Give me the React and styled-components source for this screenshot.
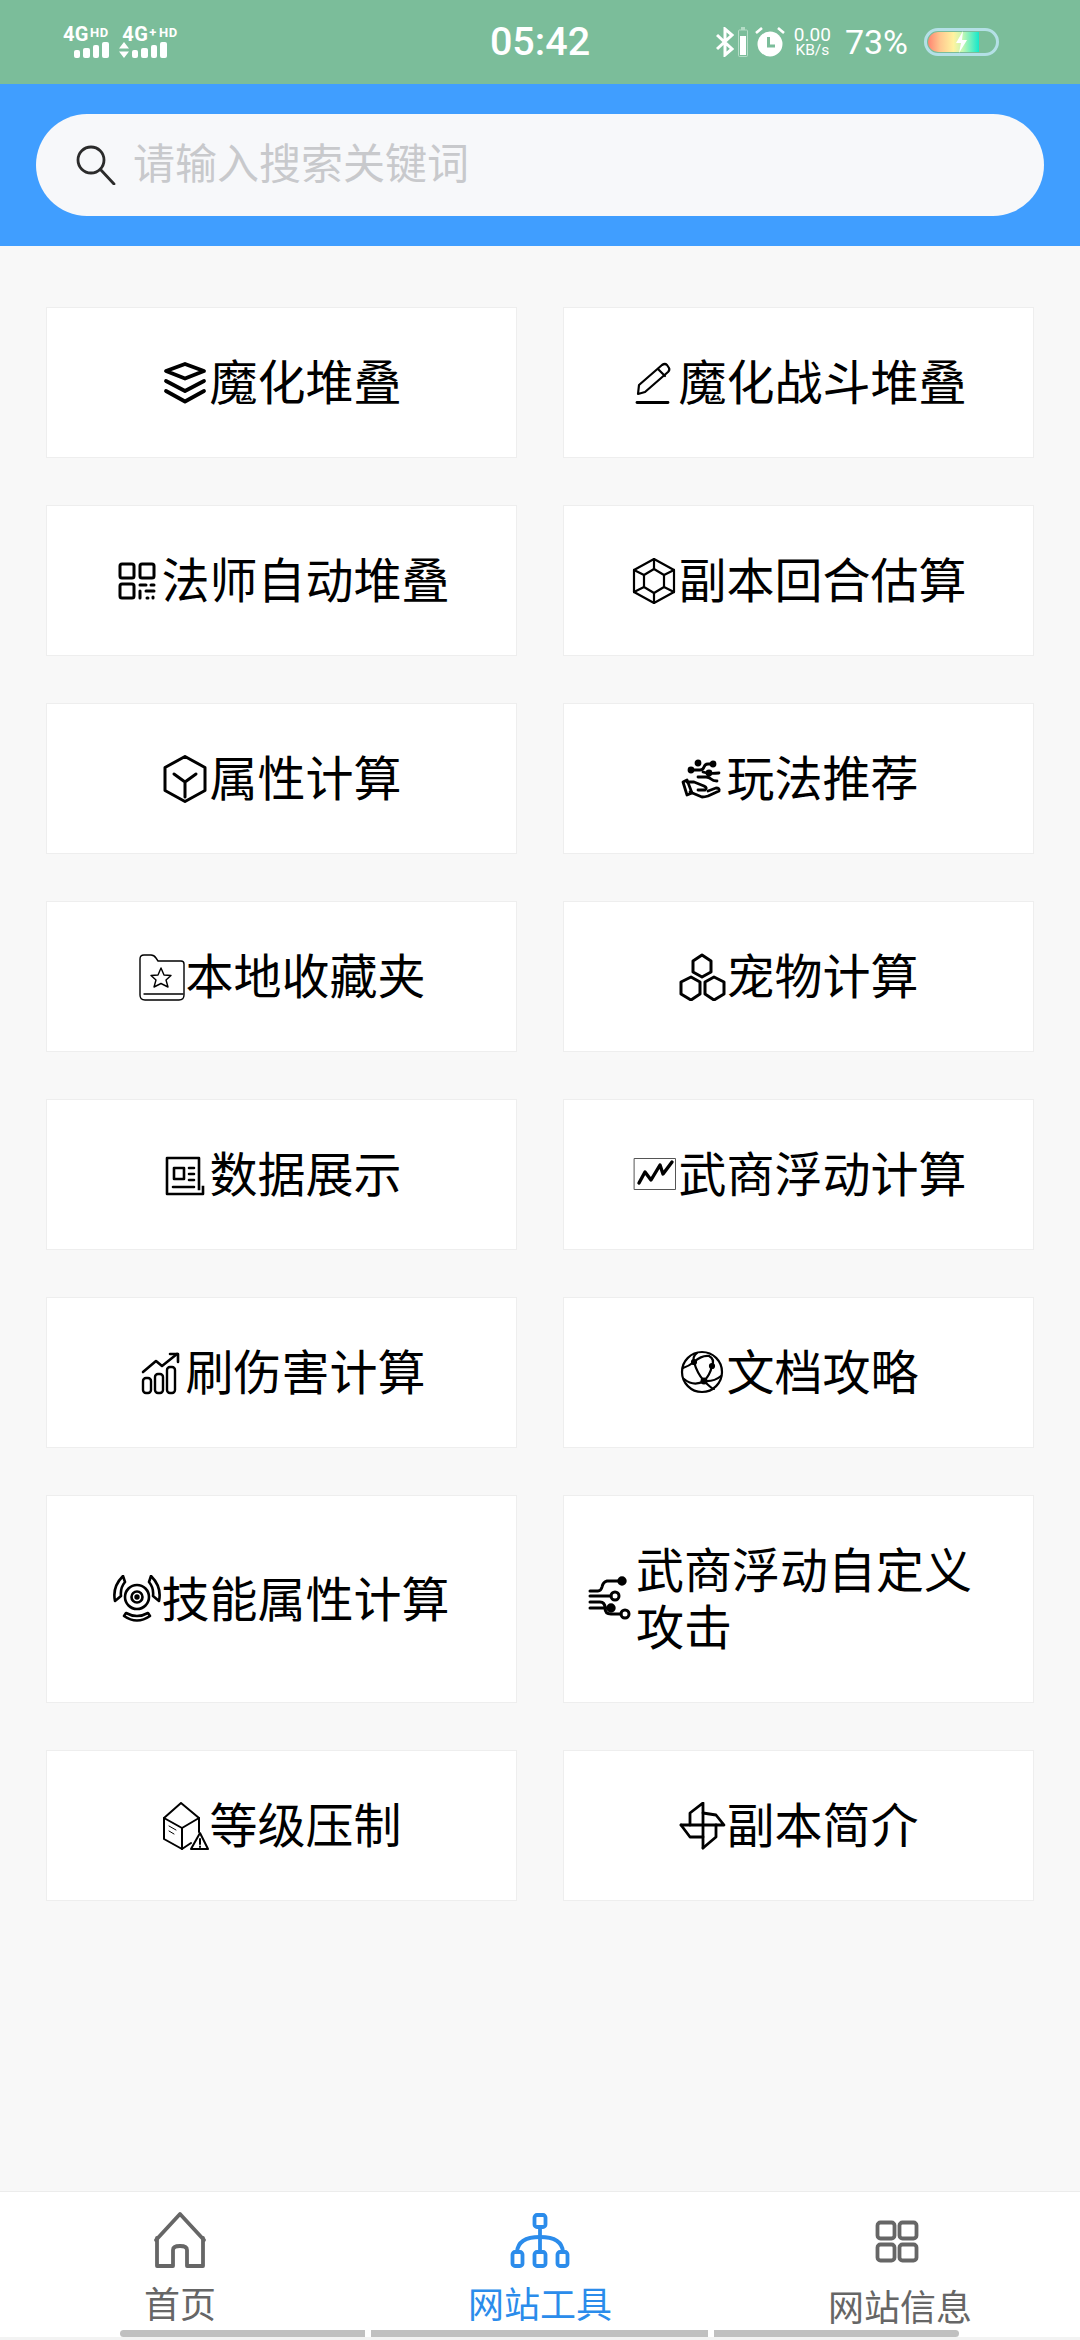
import React from 'react';
import styled, { createGlobalStyle } from 'styled-components';

const GlobalStyle = createGlobalStyle`
  html, body { margin: 0; padding: 0; background: #f8f8f8; }
  * { box-sizing: border-box; }
  body { font-family: "Noto Sans CJK SC", Roboto, sans-serif; }
`;

const Page = styled.div`
  width: 1080px;
  height: 2340px;
  display: flex;
  flex-direction: column;
  background: #f8f8f8;
  overflow: hidden;
`;

// Status bar
const StatusBar = styled.div`
  height: 84px;
  flex: none;
  background: #7bbd9a;
  color: #fff;
  display: grid;
  grid-template-columns: 1fr auto 1fr;
  align-items: center;
  font-family: Roboto, sans-serif;
`;

const StatusLeft = styled.div`
  display: flex;
  gap: 10px;
  padding: 0 0 0 63px;
  align-items: flex-start;
`;

const SignalBlock = styled.div`
  display: flex;
  flex-direction: column;
  align-items: flex-end;
  height: 30px;
`;

const NetName = styled.div`
  display: flex;
  align-items: flex-start;
  height: 14px;
  font-size: 20px;
  line-height: 15px;
  font-weight: 700;
  letter-spacing: 0.4px;
`;

const NetSup = styled.span`
  font-size: 13px;
  line-height: 11px;
  font-weight: 700;
  letter-spacing: 0.6px;
  margin-left: ${p => p.$gap || 1}px;
`;

const Bars = styled.div`
  display: flex;
  align-items: flex-end;
  gap: 3px;
  height: 16px;
  margin-top: 1px;
  margin-right: ${p => p.$inset || 0}px;
`;

const Bar = styled.span`
  width: 6.5px;
  height: ${p => p.$h}px;
  background: #fff;
  border-radius: 2px;
`;

const Time = styled.div`
  font-size: 39.5px;
  line-height: 46px;
  font-weight: 500;
`;

const StatusRight = styled.div`
  display: flex;
  align-items: center;
  justify-content: flex-end;
  padding-right: 81px;
`;

const Speed = styled.div`
  display: flex;
  flex-direction: column;
  align-items: center;
  margin: 0 14px 0 9px;
  line-height: 1;
`;

const SpeedValue = styled.span`
  font-size: 19px;
  line-height: 17px;
`;

const SpeedUnit = styled.span`
  font-size: 15.5px;
  line-height: 15px;
`;

const Percent = styled.div`
  font-size: 34px;
  line-height: 40px;
  margin-right: 16px;
`;

const Battery = styled.div`
  width: 75px;
  height: 28px;
  border: 3px solid #b4e0e6;
  border-radius: 14px;
  padding: 1px;
  display: flex;
`;

const BatteryFill = styled.div`
  width: ${p => p.$level}%;
  border-radius: 11px 0 0 11px;
  background: linear-gradient(90deg, #ff8470, #ffc890 24%, #fff3a0 50%, #c4f7b4 68%, #14e8cb 100%);
  display: flex;
  align-items: center;
  justify-content: center;
  padding-left: 16px;
`;

// Search header
const SearchHeader = styled.div`
  height: 162px;
  flex: none;
  background: #409eff;
  padding: 30px 36px;
`;

const SearchBox = styled.label`
  height: 102px;
  background: #f7f8fa;
  border-radius: 51px;
  display: flex;
  align-items: center;
  padding-left: 40px;
  gap: 17px;
`;

const SearchInput = styled.input`
  flex: 1;
  min-width: 0;
  border: none;
  outline: none;
  background: transparent;
  font-family: "Noto Sans CJK SC", sans-serif;
  font-size: 42px;
  padding: 0;
  margin-bottom: 9px;
  color: #323233;

  &::placeholder {
    color: #c8c9cc;
    opacity: 1;
  }
`;

// Tool grid
const ToolGrid = styled.div`
  flex: 1;
  display: grid;
  grid-template-columns: repeat(2, 1fr);
  gap: 47px 46px;
  padding: 61px 46px 0;
  align-content: start;
`;

const ToolCard = styled.div`
  background: #fff;
  border: 1px solid #eeeeee;
  padding: 46px 24px;
  display: flex;
  align-items: center;
  justify-content: center;
`;

const ToolLabel = styled.span`
  font-size: 48px;
  line-height: 57px;
  margin: -3px 0 3px;
  color: #000;
`;

const ToolIcon = styled.svg`
  width: 48px;
  height: 48px;
  flex: none;
  fill: none;
  stroke: #000;
  stroke-width: ${p => p.$weight || 3}px;
  stroke-linejoin: round;
  stroke-linecap: round;
`;

// Bottom tabs
const TabBar = styled.div`
  position: relative;
  height: 149px;
  flex: none;
  background: #fff;
  border-top: 1px solid #ececec;
  display: grid;
  grid-template-columns: repeat(3, 1fr);
`;

const Tab = styled.div`
  display: flex;
  flex-direction: column;
  align-items: center;
  padding-top: 18px;
  color: ${p => (p.$active ? '#2b8ceb' : '#666')};
`;

const TabIcon = styled.svg`
  width: 60px;
  height: 60px;
  fill: none;
  stroke: currentColor;
  stroke-width: 3.8px;
  stroke-linejoin: round;
  stroke-linecap: round;
`;

const TabLabel = styled.span`
  font-size: 36px;
  line-height: 44px;
  margin-top: ${p => p.$drop || 10}px;
`;

const HomeIndicator = styled.div`
  position: absolute;
  left: 120px;
  bottom: 3px;
  width: 839px;
  height: 7px;
  display: flex;
  gap: 6px;
`;

const IndicatorPart = styled.span`
  height: 7px;
  width: ${p => p.$w}px;
  background: #c0c0c0;
  border-radius: ${p => p.$r || '0'};
`;

const BottomEdge = styled.div`
  position: absolute;
  left: 0;
  right: 0;
  bottom: 0;
  height: 3px;
  background: #f3f3f3;
`;

const LayersIcon = () => (
  <ToolIcon viewBox="0 0 48 48" $weight={3.8}>
    <path d="M24 5 L43 12 L24 19.5 L5 12 Z" />
    <path d="M5 22 L24 32 L43 22" />
    <path d="M5 32 L24 42.5 L43 32" />
  </ToolIcon>
);

const PencilIcon = () => (
  <ToolIcon viewBox="0 0 48 48" $weight={2.2}>
    <path d="M8 35 L9 26 L32 6 Q35 4 37 6 L39 9 Q40 11 38 13 L15 33 Z" />
    <path d="M28 10 L35 17" />
    <path d="M7 43.5 H38" strokeWidth="2.8" />
  </ToolIcon>
);

const QrIcon = () => (
  <ToolIcon viewBox="0 0 48 48">
    <rect x="7" y="7" width="14" height="14" rx="2" />
    <rect x="27" y="7" width="14" height="14" rx="2" />
    <rect x="7" y="27" width="14" height="14" rx="2" />
    <path d="M27 28 H33 M38 28 H41 M27 34 V41 M33 34 H41 M34 41 H35 M40 40 V41" />
  </ToolIcon>
);

const GemIcon = () => (
  <ToolIcon viewBox="0 0 48 48" $weight={2.2}>
    <path d="M24 2 L44 13 V35 L24 46 L4 35 V13 Z" />
    <path d="M24 12 L34 18 V30 L24 36 L14 30 V18 Z" />
    <path d="M24 2 V12 M44 13 L34 18 M44 35 L34 30 M24 46 V36 M4 35 L14 30 M4 13 L14 18" />
  </ToolIcon>
);

const CubeIcon = () => (
  <ToolIcon viewBox="0 0 48 48">
    <path d="M24 1.5 L44 12.5 V35.5 L24 46.5 L4 35.5 V12.5 Z" />
    <path d="M13 19 L24 27 L35 19 M24 27 V42" />
  </ToolIcon>
);

const HandIcon = () => (
  <ToolIcon viewBox="0 0 48 48" $weight={2.8}>
    <circle cx="20" cy="8" r="2" fill="#000" />
    <circle cx="13" cy="15" r="2" fill="#000" />
    <circle cx="35" cy="9" r="2" fill="#000" />
    <circle cx="31" cy="18" r="2" fill="#000" />
    <path d="M13 15 H22 Q25 15 26 12 Q27 9 30 9 H35" />
    <path d="M25 17 Q30 19 41 18" />
    <path d="M20 22 H28 Q31 22 33 24 Q35 26 39 26" />
    <path d="M5 27 L9 25 L14 38 L9 40 Z" />
    <path d="M9 27 H16 L26 31 Q30 33 27 35 H20" />
    <path d="M12 37 L24 42 Q27 42 30 41 L41 36 Q42 33 38 33 L30 36" />
  </ToolIcon>
);

const FolderIcon = () => (
  <ToolIcon viewBox="0 0 48 48" $weight={1.4}>
    <path d="M3 6 Q3 2 7 2 H14 Q17 2 19 5 L21 8 H44 Q47 8 47 11 V42 Q47 47 42 47 H8 Q3 47 3 42 Z" />
    <path d="M24 15 L27 22 L34 22.5 L29 27 L31 34 L24 30.5 L17 34 L19 27 L14 22.5 L21 22 Z" />
    <path d="M7 41 H46" />
  </ToolIcon>
);

const HexesIcon = () => (
  <ToolIcon viewBox="0 0 48 48">
    <path d="M24 2 L33 8 V19 L24 24 L15 19 V8 Z" />
    <path d="M13 24 L22 29 V41 L13 47 L3 41 V29 Z" />
    <path d="M36 24 L46 29 V41 L36 47 L27 41 V29 Z" />
  </ToolIcon>
);

const DocIcon = () => (
  <ToolIcon viewBox="0 0 48 48" $weight={2.6}>
    <path d="M38 38 V7 H6 V43 H42 V36" strokeLinecap="square" />
    <rect x="13" y="17" width="10" height="11" />
    <path d="M28 17 H33 M28 23 H33 M28 29 H33 M12 36 H33" />
  </ToolIcon>
);

const TrendIcon = () => (
  <ToolIcon viewBox="0 0 48 48">
    <rect x="4.5" y="7.5" width="41" height="31" strokeWidth="1" stroke="#555" />
    <path d="M9 32 L15 21 L21 29 L30 14 L33 23 L42 11" strokeWidth="3.4" />
  </ToolIcon>
);

const GrowthIcon = () => (
  <ToolIcon viewBox="0 0 48 48" $weight={2.4}>
    <rect x="6" y="29" width="8" height="15" rx="3" />
    <rect x="18" y="25" width="8" height="19" rx="3" />
    <rect x="30" y="18" width="8" height="26" rx="3" />
    <path d="M6 23 L19 12 L25 17 L40 5" strokeWidth="2.6" />
    <path d="M33 5 H41 V13" strokeWidth="2.6" />
  </ToolIcon>
);

const GlobeIcon = () => (
  <ToolIcon viewBox="0 0 48 48" $weight={2.2}>
    <circle cx="24" cy="23" r="20" />
    <path d="M19 4 Q14 8 16 13 Q19 24 26 32 Q34 40 36 40" />
    <path d="M5 19 Q11 17 16 13 Q24 6 31 7" />
    <path d="M31 7 Q37 10 34 17 Q32 26 26 32 Q16 38 6 30" />
    <path d="M26 32 Q36 33 43 27" />
    <circle cx="16" cy="13" r="2" fill="#000" />
    <circle cx="34" cy="17" r="2" fill="#000" />
    <circle cx="26" cy="32" r="2.4" fill="#000" />
  </ToolIcon>
);

const RadarIcon = () => (
  <ToolIcon viewBox="0 0 48 48" $weight={2.6}>
    <circle cx="24" cy="22" r="12" />
    <circle cx="24" cy="22" r="5.5" />
    <circle cx="24" cy="22" r="1.4" fill="#000" />
    <path d="M10 1 Q-1 12 2 26 L8 21 Q7 13 12 7 Z" />
    <path d="M38 1 Q49 12 46 26 L40 21 Q41 13 36 7 Z" />
    <path d="M13 38 Q24 44 35 38 L37 41 Q24 50 11 41 Z" />
  </ToolIcon>
);

const CircuitIcon = () => (
  <ToolIcon viewBox="0 0 48 48" $weight={3}>
    <path d="M2 16 H10 Q13 16 14 12 Q15 7 19 6 H33" />
    <circle cx="34" cy="6" r="3.2" fill="#000" />
    <path d="M2 21 H23" />
    <circle cx="27" cy="21" r="4" />
    <path d="M2 27 H12 Q17 27 17 33 Q17 39 23 39 H33" />
    <circle cx="37" cy="39" r="4" />
    <path d="M2 33 H21" />
    <circle cx="23" cy="33" r="3.2" fill="#000" />
  </ToolIcon>
);

const WarnBoxIcon = () => (
  <ToolIcon viewBox="0 0 48 48" $weight={2}>
    <path d="M3 16 L20 1 L38 16 L21 26 Z" />
    <path d="M3 16 V37 L21 47 V26" />
    <path d="M38 16 V30 M21 47 L30 41" />
    <path d="M8 24 L15 28 M8 29 L13 32" strokeWidth="1" />
    <path d="M39 31 L47 47 H30 Z" fill="#fff" />
    <path d="M39 37 V42 M39 44.5 V45" />
  </ToolIcon>
);

const PinwheelIcon = () => (
  <ToolIcon viewBox="0 0 48 48" $weight={2.8}>
    <path d="M25 46 V1 L12 11 V23" />
    <path d="M3 23 H46 L38 13 L25 11" />
    <path d="M38 23 V35 L25 46" />
    <path d="M3 23 L12 35 H25" />
  </ToolIcon>
);

const tools = [
  { label: '魔化堆叠', Icon: LayersIcon },
  { label: '魔化战斗堆叠', Icon: PencilIcon },
  { label: '法师自动堆叠', Icon: QrIcon },
  { label: '副本回合估算', Icon: GemIcon },
  { label: '属性计算', Icon: CubeIcon },
  { label: '玩法推荐', Icon: HandIcon },
  { label: '本地收藏夹', Icon: FolderIcon },
  { label: '宠物计算', Icon: HexesIcon },
  { label: '数据展示', Icon: DocIcon },
  { label: '武商浮动计算', Icon: TrendIcon },
  { label: '刷伤害计算', Icon: GrowthIcon },
  { label: '文档攻略', Icon: GlobeIcon },
  { label: '技能属性计算', Icon: RadarIcon },
  { label: '武商浮动自定义攻击', Icon: CircuitIcon },
  { label: '等级压制', Icon: WarnBoxIcon },
  { label: '副本简介', Icon: PinwheelIcon },
];

function App() {
  return (
    <Page>
      <GlobalStyle />
      <StatusBar>
        <StatusLeft>
          <SignalBlock>
            <NetName>4G<NetSup>HD</NetSup></NetName>
            <Bars>
              <Bar $h={8} /><Bar $h={10} /><Bar $h={13} /><Bar $h={16} />
            </Bars>
          </SignalBlock>
          <SignalBlock>
            <NetName>4G<NetSup>+</NetSup><NetSup $gap={2}>HD</NetSup></NetName>
            <Bars $inset={11}>
              <svg width="10" height="16" viewBox="0 0 10 16" fill="#fff">
                <path d="M5 0 L10 6.5 H0 Z M5 16 L0 9.5 H10 Z" />
              </svg>
              <Bar $h={8} /><Bar $h={10} /><Bar $h={13} /><Bar $h={16} />
            </Bars>
          </SignalBlock>
        </StatusLeft>
        <Time>05:42</Time>
        <StatusRight>
          <svg width="18" height="30" viewBox="0 0 18 30" fill="none" stroke="#fff" strokeWidth="3">
            <path d="M1 8 L16 22 L9 28 V2 L16 8 L1 22" />
          </svg>
          <svg width="10" height="30" viewBox="0 0 10 30" style={{ marginLeft: 4 }}>
            <rect x="0.5" y="3" width="9" height="26.5" rx="1" fill="none" stroke="#b4dcc6" />
            <rect x="3" y="0" width="4" height="3" fill="#b4dcc6" />
            <rect x="2" y="9" width="6" height="19" fill="#fff" />
          </svg>
          <svg width="30" height="30" viewBox="0 0 30 30" style={{ marginLeft: 7 }}>
            <circle cx="15" cy="17" r="12.5" fill="#fff" />
            <path d="M13.5 10 V19 H20" fill="none" stroke="#7bbd9a" strokeWidth="3" />
            <path d="M1 6 L7 1 M29 6 L23 1" stroke="#fff" strokeWidth="2.6" />
          </svg>
          <Speed>
            <SpeedValue>0.00</SpeedValue>
            <SpeedUnit>KB/s</SpeedUnit>
          </Speed>
          <Percent>73%</Percent>
          <Battery>
            <BatteryFill $level={76}>
              <svg width="13" height="22" viewBox="0 0 13 22" fill="#fff">
                <path d="M8 0 L1 12 H6 L4 22 L12 9 H7 Z" />
              </svg>
            </BatteryFill>
          </Battery>
        </StatusRight>
      </StatusBar>

      <SearchHeader>
        <SearchBox>
          <svg width="40" height="40" viewBox="0 0 40 40" fill="none" stroke="#2b2b2b" strokeWidth="2.8" strokeLinecap="round">
            <circle cx="15" cy="15" r="13" />
            <path d="M24.5 24.5 L38 39" />
          </svg>
          <SearchInput placeholder="请输入搜索关键词" readOnly />
        </SearchBox>
      </SearchHeader>

      <ToolGrid>
        {tools.map(({ label, Icon }) => (
          <ToolCard key={label}>
            <Icon />
            <ToolLabel>{label}</ToolLabel>
          </ToolCard>
        ))}
      </ToolGrid>

      <TabBar>
        <Tab>
          <TabIcon viewBox="0 0 60 60">
            <path d="M6 30 L30 4 L54 30" />
            <path d="M7 28 V56 H23 V40 Q23 36 30 36 Q37 36 37 40 V56 H53 V28" />
          </TabIcon>
          <TabLabel>首页</TabLabel>
        </Tab>
        <Tab $active>
          <TabIcon viewBox="0 0 60 60">
            <rect x="24.5" y="5" width="11" height="12" rx="2.5" />
            <path d="M30 17 V42" />
            <path d="M7 42 Q8 27 30 27 Q52 27 53 42" />
            <rect x="2.5" y="42" width="10" height="14" rx="2.5" />
            <rect x="24.5" y="42" width="11" height="14" rx="2.5" />
            <rect x="47.5" y="42" width="10" height="14" rx="2.5" />
          </TabIcon>
          <TabLabel>网站工具</TabLabel>
        </Tab>
        <Tab>
          <TabIcon viewBox="0 0 60 60">
            <rect x="7.5" y="12.5" width="17" height="16" rx="3" />
            <rect x="29.5" y="12.5" width="17" height="16" rx="3" />
            <rect x="7.5" y="34.5" width="17" height="16" rx="3" />
            <rect x="29.5" y="34.5" width="17" height="16" rx="3" />
          </TabIcon>
          <TabLabel $drop={13}>网站信息</TabLabel>
        </Tab>
        <BottomEdge />
        <HomeIndicator>
          <IndicatorPart $w={245} $r="4px 0 0 4px" />
          <IndicatorPart $w={337} />
          <IndicatorPart $w={245} $r="0 4px 4px 0" />
        </HomeIndicator>
      </TabBar>
    </Page>
  );
}

export default App;
